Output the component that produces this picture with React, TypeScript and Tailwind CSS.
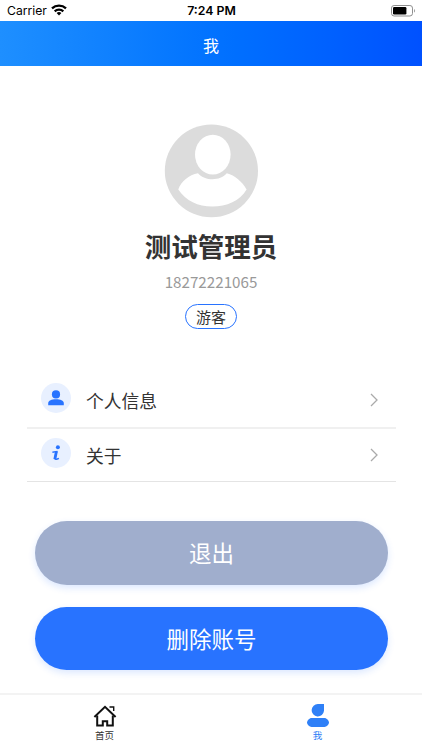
import type { ReactNode } from "react";

interface MenuRowProps {
  label: string;
  icon: ReactNode;
  className?: string;
}

function WifiIcon() {
  return (
    <svg width="16" height="12" viewBox="0 0 16 12" fill="none" stroke="#000" strokeWidth="2.3">
      <path d="M1 4.4a10.2 10.2 0 0 1 14 0" />
      <path d="M3.7 7.3a6.3 6.3 0 0 1 8.6 0" />
      <path d="M8 11.5 5.6 9.1a3.5 3.5 0 0 1 4.8 0Z" fill="#000" stroke="none" />
    </svg>
  );
}

function BatteryIcon() {
  return (
    <svg width="25" height="12" viewBox="0 0 25 12">
      <rect x="0.5" y="0.5" width="21" height="10.5" rx="2.6" fill="none" stroke="#8f8f8f" />
      <rect x="2" y="2" width="13.4" height="7.5" rx="1.2" fill="#000" />
      <path d="M23.2 3.9c1.2.5 1.2 3.2 0 3.7Z" fill="#8f8f8f" />
    </svg>
  );
}

function Avatar() {
  return (
    <svg width="94" height="94" viewBox="0 0 94 94">
      <ellipse cx="47.4" cy="46.9" rx="46.6" ry="46.3" fill="#dcdcdc" />
      <path
        d="M34 49.2C25 51 17 57 14.3 65.5C22 77 34 82.5 48.3 82.5S76 77 82.6 65.5C78 57.5 71 51.5 62.8 49.3C59 53.5 54 55.2 48.6 55.2S37.5 53.5 34 49.2Z"
        fill="#fff"
      />
      <ellipse cx="48.8" cy="30.6" rx="17.8" ry="19.9" fill="#fff" />
    </svg>
  );
}

function UserIcon() {
  return (
    <svg width="16" height="16" viewBox="0 0 16 16" fill="#2873ff">
      <circle cx="8" cy="4.4" r="4.1" />
      <path d="M0.2 15.2v-2.1C.2 10.8 3.7 9.3 8 9.3s7.8 1.5 7.8 3.8v2.1Z" />
    </svg>
  );
}

function InfoIcon() {
  return (
    <svg width="10" height="16" viewBox="0 0 10 16" fill="none" stroke="#2873ff">
      <circle cx="6.9" cy="2.3" r="2" fill="#2873ff" stroke="none" />
      <path d="M1.4 7.2 6.5 6.4" strokeWidth="1.4" />
      <path d="M5.7 6.3 4.1 12.8C3.8 14.3 5 14.8 7.9 13.4" strokeWidth="1.6" />
      <path d="M5.4 6.5 3.8 14.2" strokeWidth="2.8" />
    </svg>
  );
}

function MenuRow({ label, icon, className = "" }: MenuRowProps) {
  return (
    <div className={`flex items-center pl-[14px] pr-[18px] ${className}`}>
      <div className="flex size-[30px] -translate-y-[2px] items-center justify-center rounded-full bg-[#e8f0ff]">
        {icon}
      </div>
      <span className="ml-[15px] flex-1 text-[17.8px] leading-[26px] text-[#333]">{label}</span>
      <svg width="8" height="14" viewBox="0 0 8 14" fill="none" stroke="#aaa" strokeWidth="1.3">
        <path d="m1 1 6 6-6 6" />
      </svg>
    </div>
  );
}

export default function App() {
  return (
    <div className="flex h-[750px] w-[422px] flex-col overflow-hidden bg-white font-['Noto_Sans_CJK_SC',sans-serif]">
      {/* Status bar */}
      <div className="grid h-[21px] shrink-0 grid-cols-3 items-center pl-[7px] pr-[6px] font-[Inter,sans-serif] text-black">
        <div className="flex items-center gap-[4px]">
          <span className="pt-[2px] text-[12.2px]">Carrier</span>
          <WifiIcon />
        </div>
        <span className="pt-[2px] text-center text-[12.3px] font-semibold">7:24 PM</span>
        <div className="flex justify-end">
          <BatteryIcon />
        </div>
      </div>

      <header className="flex h-[45px] shrink-0 items-center justify-center bg-linear-to-r from-[#1e8fff] to-[#0051ff] pt-[2px] text-[16px] text-white">
        我
      </header>

      {/* Profile */}
      <section className="flex flex-col items-center pt-[58px]">
        <Avatar />
        <h1 className="mt-[9px] text-[26.5px] font-bold leading-[38px] text-[#333]">测试管理员</h1>
        <p className="mt-[5px] text-[15.2px] leading-[22px] text-[#999]">18272221065</p>
        <span className="mt-[12px] flex h-[25px] w-[52px] items-center justify-center rounded-full border border-[#2873ff] pt-px text-[15px] text-[#333]">
          游客
        </span>
      </section>

      <section className="ml-[27px] mr-[26px] mt-[43px]">
        <MenuRow label="个人信息" icon={<UserIcon />} className="h-[57px] border-b-2 border-[#f0f0f0]" />
        <MenuRow label="关于" icon={<InfoIcon />} className="h-[53px] border-b border-[#e4e4e4]" />
      </section>

      <section className="ml-[35px] mr-[34px] mt-[39px] flex flex-col gap-[22px] text-[22.5px] text-white">
        <button className="h-[64px] rounded-full bg-[#a0aecd] shadow-[0_3px_7px_rgba(40,115,255,0.16)]">
          退出
        </button>
        <button className="h-[63px] rounded-full bg-[#2873ff] shadow-[0_3px_7px_rgba(40,115,255,0.16)]">
          删除账号
        </button>
      </section>

      {/* Tab bar */}
      <nav className="mt-auto grid h-[57px] shrink-0 grid-cols-2 border-t-2 border-[#f3f3f3] text-[9.5px] leading-[14px]">
        <div className="flex flex-col items-center pt-[9px] pr-[2px] text-[#333]">
          <svg width="24" height="24" viewBox="0 0 24 24" fill="none" stroke="#111" strokeWidth="2">
            <path d="M4.2 11.5V21.500h5.6v-4.200h4.400v4.200h5.600V11.500" />
            <path d="m1.4 13 10.6-10.2 10.6 10.2" />
            <path d="M16.5 3h4.2v4" strokeWidth="1.4" />
          </svg>
          <span>首页</span>
        </div>
        <div className="flex flex-col items-center pt-[8px] pl-[2px] text-[#2b7cf6]">
          <svg width="24" height="25" viewBox="0 0 24 25" fill="#2f80f7">
            <path d="M12 1h6v6.8a6.2 6.2 0 1 1-6-6.8Z" />
            <path d="M5.5 15h13c2 0 4.5 2.8 4.5 4.6S20.5 24 18.5 24h-13C3.5 24 1 21.4 1 19.6S3.5 15 5.5 15Z" />
          </svg>
          <span>我</span>
        </div>
      </nav>
    </div>
  );
}
